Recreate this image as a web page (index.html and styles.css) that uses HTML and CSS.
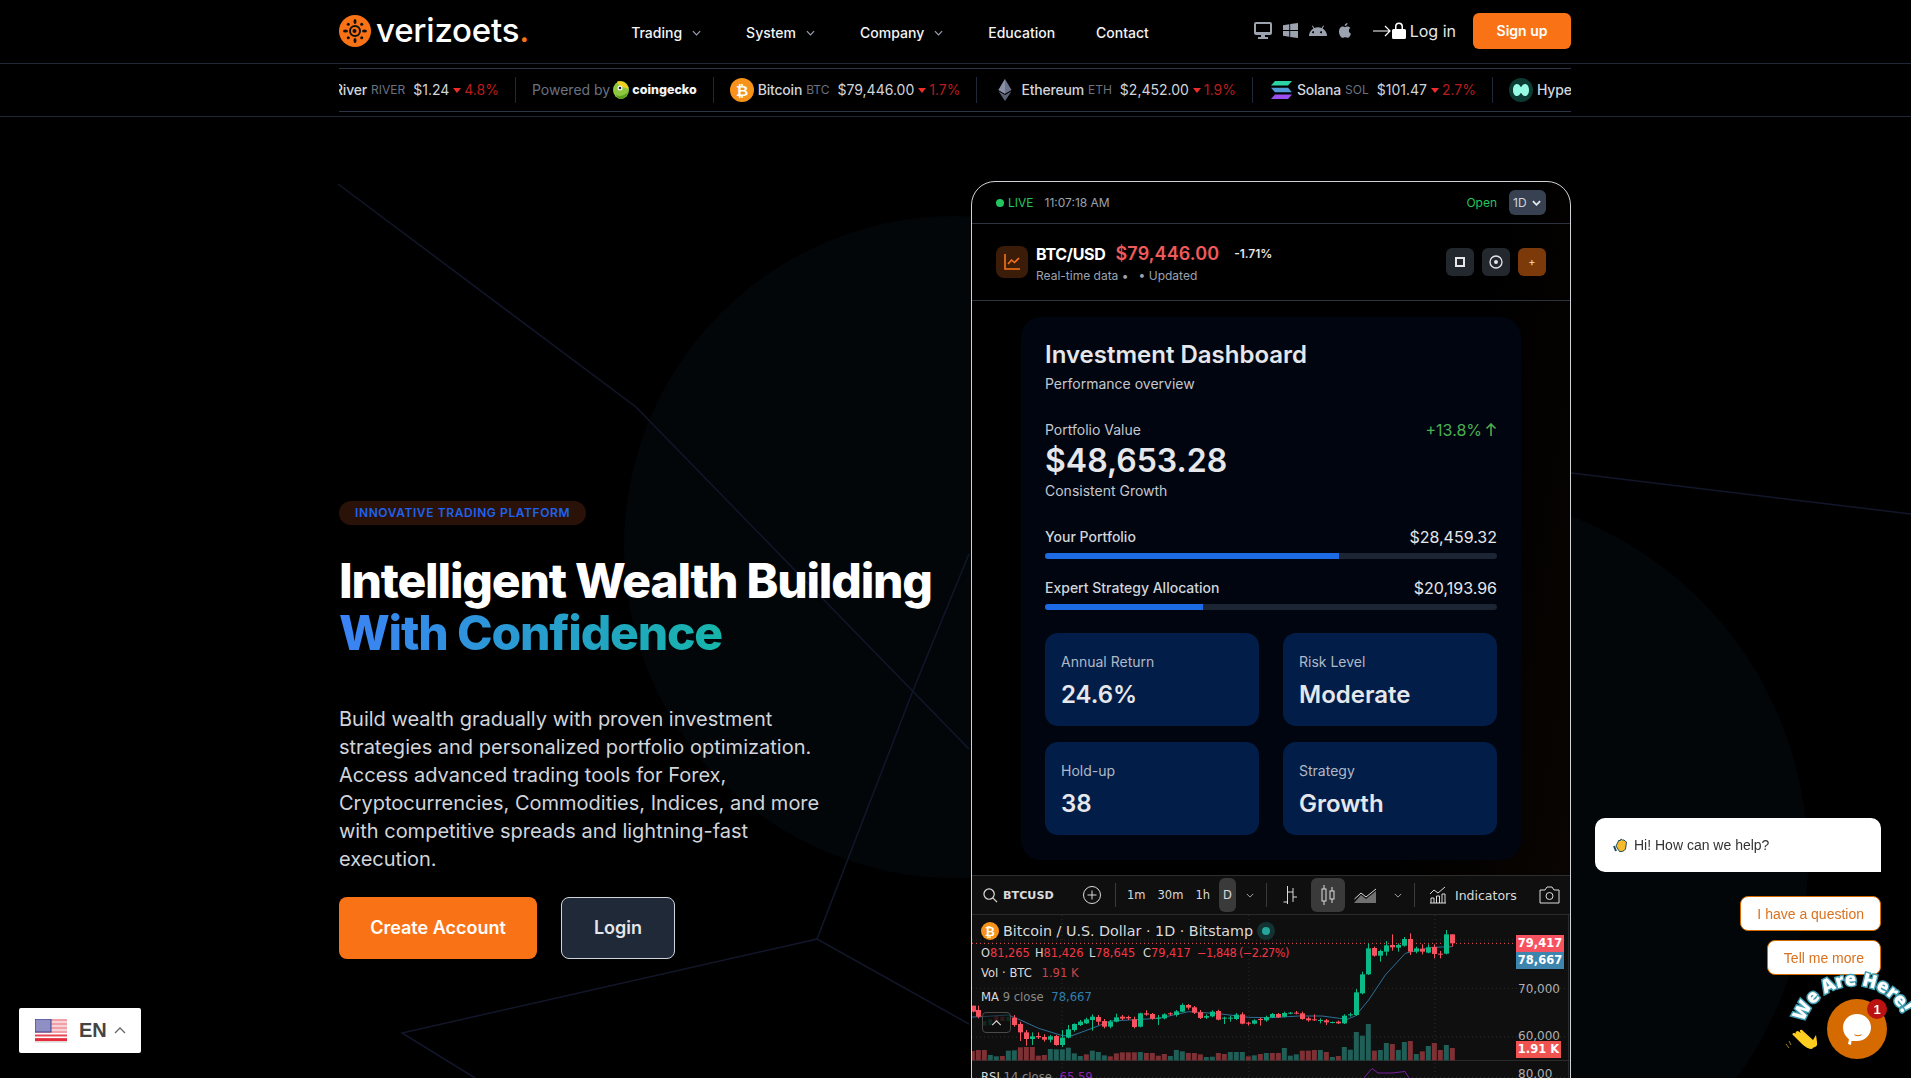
FILE: index.html
```html
<!DOCTYPE html>
<html lang="en">
<head>
<meta charset="utf-8">
<title>Verizoets</title>
<link rel="stylesheet" href="styles.css">
</head>
<body>
<svg class="backdrop" viewBox="0 0 1911 1078" aria-hidden="true">
  <circle cx="955" cy="547" r="331" fill="#020609"/>
  <circle cx="1440" cy="860" r="368" fill="#020609"/>
  <g fill="none" stroke="#12162a" stroke-width="1.500">
    <path d="M338 184 L636 407 L969 749"/>
    <path d="M969 554 L914 688 L817 939 L402 1033 L475 1078"/>
    <path d="M817 939 L969 1024"/>
    <path d="M1571 473 L1911 514"/>
  </g>
</svg>

<header class="site-header">
  <div class="container nav-row">
    <a class="logo">
      <svg class="logo-mark" viewBox="0 0 32 32">
        <circle cx="16" cy="16" r="16" fill="#f97316"/>
        <circle cx="16" cy="16" r="5" fill="none" stroke="#111" stroke-width="2"/>
        <circle cx="15.500" cy="16" r="2" fill="#111"/>
        <g fill="#111">
          <ellipse cx="16" cy="6.500" rx="1.500" ry="2.500"/><ellipse cx="16" cy="25.500" rx="1.500" ry="2.500"/>
          <ellipse cx="6.500" cy="16" rx="2.500" ry="1.500"/><ellipse cx="25.500" cy="16" rx="2.500" ry="1.500"/>
          <ellipse cx="9.300" cy="9.300" rx="1.500" ry="1.500"/><ellipse cx="22.700" cy="9.300" rx="1.500" ry="1.500"/>
          <ellipse cx="9.300" cy="22.700" rx="1.500" ry="1.500"/><ellipse cx="22.700" cy="22.700" rx="1.500" ry="1.500"/>
        </g>
      </svg>
      <span class="logo-text">verizoets<span class="logo-dot">.</span></span>
    </a>
    <nav class="main-nav">
      <a class="nav-link">Trading <svg class="chev" viewBox="0 0 10 6"><path d="M1 1l4 4 4-4"/></svg></a>
      <a class="nav-link">System <svg class="chev" viewBox="0 0 10 6"><path d="M1 1l4 4 4-4"/></svg></a>
      <a class="nav-link">Company <svg class="chev" viewBox="0 0 10 6"><path d="M1 1l4 4 4-4"/></svg></a>
      <a class="nav-link">Education</a>
      <a class="nav-link">Contact</a>
    </nav>
    <div class="platforms">
      <svg viewBox="0 0 18 17" class="pf pf-desktop"><path d="M2 0h14a2 2 0 0 1 2 2v9a2 2 0 0 1-2 2h-5v2h3v2H4v-2h3v-2H2a2 2 0 0 1-2-2V2a2 2 0 0 1 2-2zm0 2v8h14V2z"/></svg>
      <svg viewBox="0 0 15 15" class="pf pf-win"><path d="M0 2.200l6.300-1V7H0zM7.200 1L15 0v7H7.200zM0 8h6.300v5.800l-6.300-1zM7.200 8H15v7l-7.800-1.100z"/></svg>
      <svg viewBox="0 0 18 11" class="pf pf-android"><path d="M0 11a9 9 0 0 1 4.400-7.500L3 1l.8-.5 1.500 2.600a9 9 0 0 1 7.400 0L14.200.5 15 1l-1.400 2.500A9 9 0 0 1 18 11zM5 7.200a1 1 0 1 0 0 .1zm8 0a1 1 0 1 0 0 .1z"/></svg>
      <svg viewBox="0 0 13 16" class="pf pf-apple"><path d="M9.200 0c.1 1.800-1.400 3.300-3 3.200C6 1.500 7.600.1 9.200 0zM6.300 4.300c.8 0 1.500-.7 3-.7 1.200 0 2.400.6 3.100 1.700-2.500 1.500-2.100 5 .6 6.100-.6 1.600-2 4.500-3.600 4.500-.9 0-1.300-.6-2.600-.6s-1.700.6-2.600.6C1.900 16 0 12 0 9c0-3.300 2-5.300 4-5.300 1 0 1.800.6 2.300.6z"/></svg>
    </div>
    <a class="login-link">
      <svg class="login-arrow" viewBox="0 0 19 12"><path d="M0 6h17M12 1l5 5-5 5"/></svg>
      <svg class="login-lock" viewBox="0 0 14 17"><path d="M3 7V4.500a4 4 0 0 1 8 0V7h1.500A1.500 1.500 0 0 1 14 8.500v7a1.500 1.500 0 0 1-1.500 1.500h-11A1.500 1.500 0 0 1 0 15.500v-7A1.500 1.500 0 0 1 1.500 7zm1.500 0h5V4.500a2.500 2.500 0 0 0-5 0z"/></svg>
      <span>Log in</span>
    </a>
    <a class="signup">Sign up</a>
  </div>
</header>

<div class="ticker-band">
  <div class="container ticker">
    <div class="ticker-track">
      <div class="tick tick-river"><b>River</b><i>RIVER</i><span class="px">$1.24</span><em class="tri"></em><span class="down">4.8%</span></div>
      <div class="tick tick-powered">Powered by
        <svg class="gecko" viewBox="0 0 16 18"><ellipse cx="8" cy="9" rx="8" ry="9" fill="#8dc63f"/><path d="M4 0.800C9 -1 15 3 15.500 8 12 7 5 5 4 .8z" fill="#f4d21f"/><circle cx="7" cy="7" r="2.500" fill="#fff"/><circle cx="7" cy="7" r="1.300" fill="#123"/><path d="M3 14c3 2 8 1 12-3-1 4-4 7-7 7-2 0-4-1.500-5-4z" fill="#5a9e1e"/></svg>
        <strong class="cg">coingecko</strong></div>
      <div class="tick">
        <svg class="coin" viewBox="0 0 24 24"><circle cx="12" cy="12" r="12" fill="#f7931a"/><text x="12" y="17.500" class="coin-b">₿</text></svg>
        <b>Bitcoin</b><i>BTC</i><span class="px">$79,446.00</span><em class="tri"></em><span class="down">1.7%</span></div>
      <div class="tick">
        <svg class="coin" viewBox="0 0 24 24"><path d="M12 1l6.500 11L12 15.800 5.500 12z" fill="#6c7288"/><path d="M12 1v14.800L5.500 12z" fill="#8a90a8"/><path d="M12 17l6.500-3.800L12 23l-6.500-9.800z" fill="#5c6178"/></svg>
        <b>Ethereum</b><i>ETH</i><span class="px">$2,452.00</span><em class="tri"></em><span class="down">1.9%</span></div>
      <div class="tick">
        <svg class="coin" viewBox="0 0 24 24"><path d="M6 3h17l-4 4.500H2z" fill="#2bd3a5"/><path d="M2 9.700h17l4 4.500H6z" fill="#4f9bd8"/><path d="M6 16.500h17l-4 4.500H2z" fill="#9b4ff0"/></svg>
        <b>Solana</b><i>SOL</i><span class="px">$101.47</span><em class="tri"></em><span class="down">2.7%</span></div>
      <div class="tick">
        <svg class="coin" viewBox="0 0 24 24"><circle cx="12" cy="12" r="12" fill="#0c3b33"/><path d="M4 12c0-4 2-6 4-6 3 0 3 3 4 3s1-3 4-3c2 0 4 2 4 6s-2 6-4 6c-3 0-3-3-4-3s-1 3-4 3c-2 0-4-2-4-6z" fill="#97fce4"/></svg>
        <b>Hyperliquid</b></div>
    </div>
  </div>
</div>

<main class="container hero">
  <section class="hero-copy">
    <span class="eyebrow">INNOVATIVE TRADING PLATFORM</span>
    <h1 class="headline">Intelligent Wealth Building <span class="headline-accent">With Confidence</span></h1>
    <p class="lede">Build wealth gradually with proven investment strategies and personalized portfolio optimization. Access advanced trading tools for Forex, Cryptocurrencies, Commodities, Indices, and more with competitive spreads and lightning-fast execution.</p>
    <div class="cta-row">
      <a class="btn btn-primary">Create Account</a>
      <a class="btn btn-dark">Login</a>
    </div>
  </section>

  <section class="terminal">
    <div class="term-status">
      <span class="live-dot"></span><span class="live">LIVE</span><span class="clock">11:07:18 AM</span>
      <span class="open">Open</span>
      <span class="tf">1D <svg class="tf-chev" viewBox="0 0 10 6"><path d="M1 1l4 4 4-4"/></svg></span>
    </div>
    <div class="term-quote">
      <span class="quote-icon"><svg viewBox="0 0 18 18"><path d="M2 1v15h15M5 11l3.500-4 3 2.500L16 5"/></svg></span>
      <div class="quote-main">
        <div class="quote-top"><strong class="pair">BTC/USD</strong><span class="quote-px">$79,446.00</span><span class="quote-chg">-1.71%</span></div>
        <div class="quote-sub">Real-time data&nbsp;•&nbsp;&nbsp;&nbsp;•&nbsp;Updated</div>
      </div>
      <div class="quote-btns">
        <span class="qbtn"><svg class="q-stop" viewBox="0 0 10 10"><rect x="1" y="1" width="8" height="8"/></svg></span>
        <span class="qbtn"><svg viewBox="0 0 14 14"><circle cx="7" cy="7" r="6"/><circle cx="7" cy="7" r="1.300" class="qfill"/></svg></span>
        <span class="qbtn qbtn-add">+</span>
      </div>
    </div>
    <div class="term-body">
      <div class="dash">
        <h2 class="dash-title">Investment Dashboard</h2>
        <div class="dash-sub">Performance overview</div>
        <div class="pf-head"><span>Portfolio Value</span><span class="pf-up">+13.8% <svg viewBox="0 0 12 14"><path d="M6 13V1M1.500 5.500L6 1l4.500 4.500"/></svg></span></div>
        <div class="pf-value">$48,653.28</div>
        <div class="pf-note">Consistent Growth</div>
        <div class="alloc alloc-first">
          <div class="alloc-row"><span>Your Portfolio</span><span class="alloc-val">$28,459.32</span></div>
          <div class="track"><div class="fill" style="width:65%"></div></div>
        </div>
        <div class="alloc">
          <div class="alloc-row"><span>Expert Strategy Allocation</span><span class="alloc-val">$20,193.96</span></div>
          <div class="track"><div class="fill" style="width:35%"></div></div>
        </div>
        <div class="stats">
          <div class="stat"><div class="stat-label">Annual Return</div><div class="stat-value">24.6%</div></div>
          <div class="stat"><div class="stat-label">Risk Level</div><div class="stat-value">Moderate</div></div>
          <div class="stat"><div class="stat-label">Hold-up</div><div class="stat-value">38</div></div>
          <div class="stat"><div class="stat-label">Strategy</div><div class="stat-value">Growth</div></div>
        </div>
      </div>
    </div>
    <div class="tv">
      <div class="tv-bar">
        <svg class="tv-i tv-search" viewBox="0 0 16 16"><circle cx="6.500" cy="6.500" r="5.500"/><path d="M10.500 10.500L15 15"/></svg>
        <strong class="tv-sym">BTCUSD</strong>
        <svg class="tv-i tv-plus" viewBox="0 0 18 18"><circle cx="9" cy="9" r="8.500"/><path d="M9 4.500v9M4.500 9h9"/></svg>
        <span class="tv-sep tv-sep-a"></span>
        <span class="tv-tf">1m</span><span class="tv-tf">30m</span><span class="tv-tf">1h</span><span class="tv-tf tv-on">D</span>
        <svg class="tv-chev" viewBox="0 0 10 6"><path d="M1 1l4 4 4-4"/></svg>
        <span class="tv-sep tv-sep-b"></span>
        <svg class="tv-i tv-bars" viewBox="0 0 14 20"><path d="M4.500 1v18M.5 17h4M4.500 7h3M10 3v14M7.500 7H10M10 12h4"/></svg>
        <span class="tv-candle"><svg class="tv-i" viewBox="0 0 14 20"><rect x="1" y="4" width="4" height="12"/><path d="M3 0v4M3 16v4M11 2v4M11 14v4"/><rect x="9" y="6" width="4" height="8"/></svg></span>
        <svg class="tv-i tv-area" viewBox="0 0 24 15"><path d="M.5 11L7 5l5 4 10-8"/><path class="tv-hatch" d="M0 15l7-8 5 4 10-8v12z"/></svg>
        <svg class="tv-chev tv-chev-b" viewBox="0 0 10 6"><path d="M1 1l4 4 4-4"/></svg>
        <span class="tv-sep tv-sep-c"></span>
        <svg class="tv-i tv-ind" viewBox="0 0 18 18"><path d="M1 8l4-4 4 3 7-6M1 17h16M2 17v-5h3v5M7.500 17v-7h3v7M13 17v-9h3v9"/></svg>
        <span class="tv-label">Indicators</span>
        <svg class="tv-i tv-cam" viewBox="0 0 21 18"><path d="M1 4h5l2-3h5l2 3h5v13H1z"/><circle cx="10.500" cy="10" r="3.500"/></svg>
      </div>
      <div class="tv-chart">
        <svg id="candles" class="tv-canvas" viewBox="0 0 598 163"></svg>
        <div class="legend">
          <div class="legend-title">
            <svg class="legend-coin" viewBox="0 0 18 18"><circle cx="9" cy="9" r="9" fill="#f7931a"/><text x="9" y="13.500" class="legend-b">₿</text></svg>
            <span>Bitcoin / U.S. Dollar · 1D · Bitstamp</span><span class="legend-live"></span>
          </div>
          <div class="legend-ohlc">
            <span class="l-seg"><span class="l-w">O</span>81,265</span>
            <span class="l-seg"><span class="l-w">H</span>81,426</span>
            <span class="l-seg"><span class="l-w">L</span>78,645</span>
            <span class="l-seg"><span class="l-w">C</span>79,417</span>
            <span class="l-seg l-seg-chg">−1,848</span>
            <span class="l-seg-pct">(−2.27%)</span>
          </div>
          <div class="legend-row">Vol · BTC <span class="l-r">1.91 K</span></div>
          <div class="legend-row legend-ma">MA <span class="l-g">9 close</span> <span class="l-b">78,667</span></div>
        </div>
        <span class="collapse"><svg viewBox="0 0 12 7"><path d="M1 6l5-5 5 5"/></svg></span>
        <div class="rsi">RSI <span class="l-g">14 close</span> <span class="l-p">65.59</span></div>
        <span class="axis tag tag-red">79,417</span>
        <span class="axis tag tag-blue">78,667</span>
        <span class="axis lbl lbl-70">70,000</span>
        <span class="axis lbl lbl-60">60,000</span>
        <span class="axis tag tag-vol">1.91 K</span>
        <span class="axis lbl lbl-80">80.00</span>
      </div>
    </div>
  </section>
</main>

<div class="lang">
  <svg class="flag" viewBox="0 0 32 24">
    <rect width="32" height="24" fill="#f2a0a8"/>
    <g fill="#f6d2d6"><rect y="2" width="32" height="2"/><rect y="6" width="32" height="2"/><rect y="10" width="32" height="2"/></g>
    <rect y="14" width="32" height="1.600" fill="#fff"/><rect y="15.600" width="32" height="2" fill="#e84855"/><rect y="17.600" width="32" height="1.600" fill="#fff"/><rect y="19.200" width="32" height="3" fill="#e52b3a"/><rect y="22.200" width="32" height="1.800" fill="#e8e8e8"/>
    <rect width="16" height="13" fill="#8f8fc4" stroke="#3b3f8f"/>
  </svg>
  <span class="lang-code">EN</span>
  <svg class="lang-chev" viewBox="0 0 12 7"><path d="M1 6l5-5 5 5"/></svg>
</div>

<aside class="chat">
  <div class="chat-bubble">
    <svg class="wave-small" viewBox="0 0 16 16"><path d="M3 9l3-6 1 1 1-2 1.500 1 1.500 0 1 1 1.500 1-1 7c-1 2-4 3-6 2.500z" fill="#f6bb2a" stroke="#1f4c5c"/><path d="M1 9l2 5" stroke="#1f4c5c" stroke-width="2"/></svg>
    <span>Hi! How can we help?</span>
  </div>
  <a class="chat-opt">I have a question</a>
  <a class="chat-opt">Tell me more</a>
  <div class="chat-launch">
    <svg class="launch-art" viewBox="0 0 131 118">
      <defs><path id="arc" d="M21.500 72 A 54 54 0 0 1 128 69"/></defs>
      <text class="we-here"><textPath href="#arc" startOffset="10">We Are Here!</textPath></text>
      <circle cx="77" cy="69" r="30" fill="#d46a00"/>
      <path d="M77 54c8 0 14 6 14 13.500S85 81 77 81l-5.500 0-0.500 4-3-1 1-4.500C65 76 63 72 63 67.500 63 60 69 54 77 54z" fill="#fff"/>
      <path d="M74 74c2 1.500 6 1.500 8 0-1 3-7 3-8 0z" fill="#d46a00"/>
      <circle cx="97" cy="49" r="10" fill="#bb1111"/>
      <text x="97" y="54" class="badge-num">1</text>
      <path d="M14 76l8 8c3 3 7 5 10 5 2-3 6-1 5-7l-1-7-3 5-11-10c-2-1-3 1-1 3l-3-2c-3 0-3 3-1 3l-3-1c-2 0-2 2 0 3z" fill="#ffcd1f"/>
      <path d="M9 81l2 4M6 84l3 4" stroke="#9a8320" fill="none"/>
    </svg>
  </div>
</aside>
<script src="chart.js"></script>
</body>
</html>
```
FILE: styles.css
```css
* { box-sizing: border-box; }
html, body { margin: 0; height: 100%; }
body {
  position: relative;
  height: 1078px;
  overflow: hidden;
  background: #000;
  color: #fff;
  font-family: Inter, "Liberation Sans", sans-serif;
}
a { color: inherit; text-decoration: none; }
.backdrop { position: absolute; inset: 0; width: 100%; height: 100%; z-index: 0; }
.container { width: 1232px; margin: 0 0 0 339px; position: relative; }

.site-header { position: relative; height: 64px; border-bottom: 1px solid #1e2836; }
.nav-row { display: flex; align-items: center; height: 63px; }
.logo { display: flex; align-items: center; gap: 5px; margin-top: -1px; }
.logo-mark { width: 32px; height: 32px; display: block; }
.logo-text { font-size: 33px; font-weight: 500; color: #fff; letter-spacing: -0.2px; line-height: 1; margin-top: -2px; }
.logo-dot { color: #f97316; }
.main-nav { display: flex; align-items: center; margin-left: 102px; gap: 41px; }
.nav-link { display: flex; align-items: center; gap: 10px; font-size: 14px; font-weight: 500; color: #f3f4f6; margin-top: 2px; }
.chev { width: 9px; height: 6px; margin-right: 4px; fill: none; stroke: #9ca3af; stroke-width: 1.300; }
.platforms { display: flex; align-items: center; margin-left: auto; gap: 11px; fill: #9ca3af; margin-top: -2px; }
.pf { display: block; }
.pf-desktop { width: 18px; height: 17px; }
.pf-win { width: 15px; height: 15px; }
.pf-android { width: 18px; height: 11px; }
.pf-apple { width: 12px; height: 15px; margin-left: 1px; }
.login-link { display: flex; align-items: center; margin-left: 22px; font-size: 16px; color: #e5e7eb; margin-top: -2px; }
.login-arrow { width: 19px; height: 12px; fill: none; stroke: #fff; stroke-width: 1.200; }
.login-lock { width: 14px; height: 17px; fill: #fff; margin-right: 4px; }
.signup { margin-left: 17px; width: 98px; height: 36px; display: flex; align-items: center; justify-content: center; margin-top: -2px; background: #f97316; border-radius: 6px; font-size: 14px; font-weight: 600; color: #fff; }

.ticker-band { position: relative; height: 53px; border-bottom: 1px solid #1e2836; padding: 4px 0; }
.ticker { height: 44px; border-top: 1px solid #2a3646; border-bottom: 1px solid #2a3646; overflow: hidden; }
.ticker-track { display: flex; align-items: center; height: 100%; margin-left: -5px; width: 1400px; }
.tick { display: flex; align-items: center; height: 26px; flex: none; padding: 0 16px; border-right: 1px solid #1f2937; font-size: 14px; color: #d1d5db; white-space: nowrap; margin-top: -1px; }
.tick b { font-weight: 500; color: #d1d5db; letter-spacing: -0.2px; }
.tick i { font-style: normal; font-size: 12px; color: #6b7280; margin-left: 4px; }
.tick .px { margin-left: 8px; color: #d1d5db; }
.tick .down { color: #b91c1c; }
.tri { width: 0; height: 0; border: 4.500px solid transparent; border-top: 5px solid #ef2b2b; border-bottom: 0; margin: 1px 3px 0 4px; }
.tick-river { padding-left: 0; padding-right: 16px; }
.tick-powered { color: #6b7280; font-size: 14px; gap: 3px; }
.gecko { width: 16px; height: 18px; }
.cg { color: #f3f4f6; font-size: 12.500px; font-weight: 800; }
.coin { width: 24px; height: 24px; margin-right: 4px; }
.coin-b { font-family: "DejaVu Sans", sans-serif; font-size: 15px; font-weight: 700; fill: #fff; text-anchor: middle; }

.hero { position: relative; display: flex; justify-content: space-between; align-items: flex-start; z-index: 1; }
.hero-copy { width: 590px; padding-top: 384px; }
.eyebrow { display: inline-block; height: 24px; line-height: 24px; padding: 0 16px; border-radius: 12px; background: #2a1208; color: #1f62f0; font-size: 12px; font-weight: 600; letter-spacing: 0.600px; }
.headline { margin: 30px 0 0; font-size: 48px; font-weight: 800; line-height: 52px; letter-spacing: -1.200px; color: #fff; width: 620px; }
.headline-accent { display: block; background: linear-gradient(90deg, #3b82f6, #14b8a6); -webkit-background-clip: text; background-clip: text; color: transparent; width: 403px; }
.lede { margin: 46px 0 0; width: 490px; font-size: 20px; line-height: 28px; color: #d1d5db; }
.cta-row { display: flex; gap: 24px; margin-top: 24px; }
.btn { display: flex; align-items: center; justify-content: center; height: 62px; padding-bottom: 2px; border-radius: 8px; font-size: 18px; font-weight: 600; }
.btn-primary { width: 198px; background: #f97316; color: #fff; }
.btn-dark { width: 114px; background: #1f2937; color: #e5e7eb; border: 1px solid #d1d5db; }

.terminal { width: 600px; height: 1000px; margin-top: 64px; border: 1px solid #cfd3d8; border-radius: 24px 24px 0 0; background: linear-gradient(100deg, #000 70%, #0c0602); overflow: hidden; }
.term-status { display: flex; align-items: center; height: 42px; padding: 0 24px; border-bottom: 1px solid #2d3440; font-size: 12px; }
.live-dot { width: 8px; height: 8px; border-radius: 50%; background: #22c55e; }
.live { color: #22c55e; margin-left: 4px; }
.clock { color: #9ca3af; margin-left: 11px; }
.open { color: #22c55e; margin-left: auto; }
.tf { display: flex; align-items: center; gap: 5px; width: 37px; height: 25px; margin-left: 12px; padding-left: 4px; background: #374151; border-radius: 6px; color: #d1d5db; }
.tf-chev { width: 9px; height: 6px; fill: none; stroke: #e5e7eb; stroke-width: 2; }
.term-quote { display: flex; align-items: center; height: 77px; padding: 0 24px; border-bottom: 1px solid #2d3440; }
.quote-icon { width: 32px; height: 32px; display: flex; align-items: center; justify-content: center; background: #3b1c08; border-radius: 8px; }
.quote-icon svg { width: 18px; height: 18px; fill: none; stroke: #f97316; stroke-width: 1.600; }
.quote-main { margin-left: 8px; }
.quote-top { display: flex; align-items: center; height: 22px; margin-top: 1px; }
.pair { font-size: 16px; font-weight: 700; color: #fff; letter-spacing: -0.300px; }
.quote-px { font-size: 18px; font-weight: 600; color: #f05a5a; margin-left: 10px; letter-spacing: 0.100px; }
.quote-chg { font-size: 12px; font-weight: 600; color: #e5e7eb; margin-left: 15px; }
.quote-sub { font-size: 12px; color: #9ca3af; margin-top: 3px; }
.quote-btns { display: flex; gap: 8px; margin-left: auto; }
.qbtn { width: 28px; height: 28px; display: flex; align-items: center; justify-content: center; background: #23272e; border-radius: 6px; }
.qbtn svg { width: 14px; height: 14px; fill: none; stroke: #e5e7eb; stroke-width: 1.300; }
.qbtn .q-stop { width: 10px; height: 10px; stroke-width: 2; }
.qfill { fill: #e5e7eb; }
.qbtn-add { background: #7c3a0a; color: #f3e0d0; font-size: 11px; }
.term-body { padding: 16px 49px 15px; }
.dash { height: 543px; padding: 24px; background: #01050f; border-radius: 20px; }
.dash-title { margin: 0; font-size: 24px; font-weight: 600; line-height: 28px; color: #e5e7eb; }
.dash-sub { margin-top: 5px; font-size: 14px; line-height: 20px; color: #c4c8cf; }
.pf-head { display: flex; justify-content: space-between; align-items: center; margin-top: 26px; font-size: 14px; line-height: 20px; color: #c4c8cf; }
.pf-up { display: flex; align-items: center; gap: 3px; color: #4caf50; font-size: 16px; }
.pf-up svg { width: 12px; height: 14px; fill: none; stroke: #4caf50; stroke-width: 1.600; }
.pf-value { margin-top: 1px; font-size: 32px; font-weight: 600; line-height: 40px; color: #e5e7eb; }
.pf-note { font-size: 14px; line-height: 20px; color: #c4c8cf; }
.alloc { margin-top: 17px; }
.alloc-first { margin-top: 24px; }
.alloc-row { display: flex; justify-content: space-between; align-items: center; font-size: 14px; line-height: 24px; font-weight: 500; color: #d1d5db; }
.alloc-val { font-size: 16px; font-weight: 400; color: #e5e7eb; }
.track { height: 6px; margin-top: 4px; background: #1c2533; border-radius: 3px; overflow: hidden; }
.fill { height: 100%; background: #1d6ae5; }
.stats { display: grid; grid-template-columns: 214px 214px; justify-content: space-between; gap: 16px 24px; margin-top: 23px; }
.stat { height: 93px; padding: 19px 16px 0; background: #021d47; border-radius: 13px; }
.stat-label { font-size: 14px; line-height: 20px; color: #b0b9c8; }
.stat-value { margin-top: 7px; font-size: 24px; line-height: 32px; font-weight: 600; color: #e5e7eb; }

.tv { background: #0f0f0f; border-top: 1px solid #2e2e2e; }
.tv-bar { display: flex; align-items: center; height: 39px; border-bottom: 1px solid #2a2a2a; font-family: "DejaVu Sans", sans-serif; font-size: 12.500px; color: #dbdbdb; }
.tv-i { fill: none; stroke: #dbdbdb; stroke-width: 1; display: block; flex: none; }
.tv-search { width: 15px; height: 15px; margin-left: 11px; stroke-width: 1.300; }
.tv-sym { margin-left: 5px; width: 52px; font-weight: 700; font-size: 11.200px; }
.tv-plus { width: 18px; height: 18px; margin-left: 28px; }
.tv-sep { width: 1px; height: 24px; background: #3a3a3a; flex: none; }
.tv-sep-a { margin: 0 11px 0 14px; }
.tv-tf { margin-right: 12px; font-size: 11.500px; }
.tv-on { width: 17px; height: 34px; margin: 0 0 0 -3px; display: flex; align-items: center; justify-content: center; background: #3a3a3a; border-radius: 6px; }
.tv-chev { width: 8px; height: 5px; fill: none; stroke: #a8a8a8; stroke-width: 1.200; margin-left: 10px; flex: none; }
.tv-sep-b { margin: 0 16px 0 12px; }
.tv-bars { width: 14px; height: 20px; }
.tv-candle { width: 34px; height: 34px; margin-left: 14px; display: flex; align-items: center; justify-content: center; background: #3a3a3a; border-radius: 6px; }
.tv-candle svg { width: 14px; height: 20px; }
.tv-area { width: 24px; height: 15px; margin-left: 9px; }
.tv-hatch { fill: #9a9a9a; stroke: none; opacity: 0.700; }
.tv-chev-b { margin-left: 16px; }
.tv-sep-c { margin: 0 14px 0 12px; }
.tv-ind { width: 18px; height: 18px; }
.tv-label { margin-left: 8px; font-size: 12.500px; }
.tv-cam { width: 21px; height: 18px; margin-left: 22px; }

.tv-chart { position: relative; height: 180px; }
.tv-canvas { position: absolute; left: 0; top: 0; width: 598px; height: 163px; display: block; }
.legend { position: absolute; left: 9px; top: 6px; font-family: "DejaVu Sans", sans-serif; }
.legend-title { display: flex; align-items: center; height: 20px; font-size: 14.300px; color: #dbdbdb; white-space: nowrap; }
.legend-coin { width: 18px; height: 18px; margin-right: 4px; }
.legend-b { font-size: 12px; font-weight: 700; fill: #fff; text-anchor: middle; }
.legend-live { width: 8px; height: 8px; margin-left: 9px; border-radius: 50%; background: #26a69a; box-shadow: 0 0 0 5px #123331; }
.legend-ohlc { display: flex; margin-top: 3px; height: 18px; line-height: 18px; font-size: 11.400px; color: #f23645; white-space: nowrap; }
.l-seg { width: 54px; flex: none; }
.l-seg-chg { width: 42px; letter-spacing: -0.500px; }
.l-seg-pct { letter-spacing: -0.600px; }
.l-w { color: #dbdbdb; }
.legend-row { height: 18px; line-height: 18px; margin-top: 2px; font-size: 11.600px; color: #dbdbdb; white-space: nowrap; }
.legend-ma { margin-top: 6px; }
.l-r { color: #c9454c; margin-left: 6px; }
.l-g { color: #8a8a8a; }
.l-b { color: #2f7fb0; margin-left: 4px; }
.l-p { color: #8e24aa; margin-left: 4px; }
.collapse { position: absolute; left: 10px; top: 97px; width: 29px; height: 21px; display: flex; align-items: center; justify-content: center; border: 1px solid #4a4a4a; border-radius: 4px; background: rgba(15,15,15,.55); }
.collapse svg { width: 11px; height: 6px; fill: none; stroke: #dbdbdb; stroke-width: 1.300; }
.rsi { position: absolute; left: 9px; top: 155px; font-family: "DejaVu Sans", sans-serif; font-size: 11.600px; color: #dbdbdb; white-space: nowrap; }
.axis { position: absolute; font-family: "DejaVu Sans", sans-serif; font-size: 12px; font-weight: 400; white-space: nowrap; }
.tag { left: 544px; height: 17px; line-height: 17px; text-align: center; color: #fff; font-weight: 700; font-size: 11.500px; }
.tag-red { top: 20px; width: 48px; background: #f7525f; }
.tag-blue { top: 37px; width: 48px; background: #3d85ad; }
.tag-vol { top: 126px; width: 45px; background: #ef5350; }
.lbl { left: 546px; color: #b0b0b0; }
.lbl-70 { top: 67px; }
.lbl-60 { top: 114px; }
.lbl-80 { top: 152px; }

.lang { position: fixed; left: 19px; top: 1008px; width: 122px; height: 45px; display: flex; align-items: center; background: #fff; border-radius: 2px; z-index: 5; }
.flag { width: 32px; height: 24px; margin-left: 16px; }
.lang-code { margin-left: 12px; font-family: "Liberation Sans", sans-serif; font-size: 20px; font-weight: 700; color: #444; }
.lang-chev { width: 12px; height: 7px; margin-left: 7px; fill: none; stroke: #666; stroke-width: 1.300; }

.chat { position: fixed; left: 1595px; top: 818px; width: 316px; height: 260px; z-index: 5; font-family: "Liberation Sans", sans-serif; display: flex; flex-direction: column; align-items: flex-end; padding-right: 30px; }
.chat-bubble { display: flex; align-items: center; gap: 5px; width: 286px; height: 54px; padding-left: 18px; background: #fff; border-radius: 10px 10px 0 10px; color: #333; font-size: 14px; }
.wave-small { width: 16px; height: 16px; }
.chat-opt { display: flex; align-items: center; height: 35px; margin-top: 9px; padding: 0 16px; background: #fff; border: 1px solid #d46a00; border-radius: 8px; color: #d9721f; font-size: 14px; }
.chat-bubble + .chat-opt { margin-top: 24px; }
.chat-launch { position: absolute; left: 185px; top: 142px; width: 131px; height: 118px; }
.launch-art { width: 131px; height: 118px; display: block; overflow: visible; }
.we-here { font-family: "Open Sans", sans-serif; font-weight: 800; font-size: 18.500px; fill: #fff; stroke: #3f9fb2; stroke-width: 3px; paint-order: stroke; }
.badge-num { font-size: 13px; font-weight: 700; fill: #fff; text-anchor: middle; }
```
FILE: chart.js
```js
// x, body top, body bottom, wick top, wick bottom (zoomed reference units), colour
const G = '#0bba87', R = '#f7525f';
const left = [
[2,272,290,272,292,R],[19,285,305,272,310,R],[127,308,330,300,335,R],[145,327,352,320,378,R],[163,352,372,345,392,R],[181,364,372,352,390,G],[199,363,367,352,372,R],[217,366,374,358,380,R],[235,364,374,360,382,G],[253,363,390,360,392,R],[271,368,390,345,396,G],[289,343,368,330,370,G],[307,327,345,325,350,G],[325,320,330,315,333,G],[343,313,325,308,327,G],[361,305,315,298,347,G],[379,306,320,300,330,R],[397,318,335,312,340,R],[415,320,335,315,340,G],[433,307,320,296,322,G],[451,305,311,300,315,R],[469,306,310,302,315,R],[487,313,336,305,340,R],[505,295,335,293,337,G],[523,295,299,286,302,R],[541,297,311,294,314,R],[559,308,311,300,330,G],[577,298,310,295,313,G],[595,295,298,292,302,R],[613,289,300,285,305,G],[631,270,290,265,292,G],[649,270,278,267,284,R],[667,277,293,273,297,R],[685,292,309,285,312,R],[703,303,308,298,312,G],[721,290,304,286,307,G],[739,288,314,284,316,R],[757,308,310,305,327,G],[775,308,310,302,320,G],[793,299,312,294,315,G],[811,298,326,292,328,R],[829,323,326,320,332,R],[847,316,326,313,328,G],[865,312,315,308,332,R],[883,306,316,302,320,G],
[901,297,307,294,309,G],[919,297,307,294,309,R],[937,294,305,290,307,G],[955,293,296,291,298,G],[973,293,296,288,298,R],[991,295,312,290,314,R],[1009,310,316,305,320,R],[1027,313,316,298,318,R],[1045,315,317,310,325,G],[1063,316,322,312,330,R],[1081,321,324,320,325,G],[1099,320,325,317,327,R],[1117,302,325,298,327,G],[1135,298,300,293,305,G],[1153,232,300,222,303,G],[1171,178,235,170,238,G],[1189,100,178,85,180,G],[1207,99,122,95,125,R],[1225,108,122,104,140,G],[1243,91,110,78,122,G],[1261,90,97,58,107,R],[1279,90,98,85,110,G],[1297,72,92,66,95,G],[1315,72,110,55,120,R],[1333,100,110,95,115,G],[1351,101,110,88,118,R],[1369,97,113,88,115,G],[1387,96,117,88,130,R],[1405,116,118,108,130,R],[1423,58,116,45,118,G],[1441,58,85,58,95,R]];
const vols = [[1,408,R],[19,405,R],[37,405,R],[55,420,G],[73,424,G],[91,423,R],[109,407,G],[127,406,G],[145,397,R],[163,396,R],[181,396,R],[199,422,R],[217,420,R],[235,402,G],[253,403,G],[271,403,G],[289,398,G],[307,415,G],[325,423,G],[343,418,R],[361,407,G],[379,411,G],[397,421,G],[415,424,R],[433,415,R],[451,412,R],[469,412,R],[487,412,R],[505,411,G],[523,414,R],[541,414,R],[559,422,R],[577,417,R],[595,423,G],[613,405,G],[631,409,G],[649,414,R],[667,414,R],[685,418,R],[703,426,G],[721,425,G],[739,414,R],[757,417,R],[775,411,G],[793,411,G],[811,411,G],[829,424,R],[847,421,G],[865,417,R],[883,414,G],
[901,414,R],[919,414,R],[937,399,G],[955,422,G],[973,418,G],[991,407,R],[1009,407,R],[1027,405,R],[1045,405,G],[1063,411,R],[1081,426,G],[1099,423,R],[1117,396,G],[1135,404,G],[1153,351,G],[1171,362,G],[1189,327,G],[1207,407,R],[1225,405,G],[1243,384,G],[1261,387,R],[1279,405,G],[1297,381,G],[1315,378,R],[1333,417,G],[1351,409,R],[1369,393,G],[1387,384,R],[1405,405,R],[1423,390,G],[1441,399,R]];
const ma = [[0,306],[30,305],[109,300],[145,315],[200,340],[271,362],[300,362],[360,340],[415,318],[470,315],[560,310],[650,290],[740,296],[830,307],[900,308],[980,303],[1050,303],[1125,313],[1150,303],[1190,255],[1240,180],[1300,115],[1320,110],[1380,97],[1440,95]];
const u = 1 / 3;
let s = '';
const grid = 'stroke="#2c2c2c" stroke-dasharray="1 3"';
[75, 220, 366, 487].forEach(y => { s += `<line x1="0" x2="598" y1="${y * u}" y2="${y * u}" ${grid}/>`; });
[90, 277, 463].forEach(x => { s += `<line x1="${x}" x2="${x}" y1="0" y2="163" ${grid}/>`; });
s += `<line x1="0" x2="544" y1="${85 * u}" y2="${85 * u}" stroke="#f7525f" stroke-dasharray="1 3"/>`;
s += `<line x1="0" x2="598" y1="145.500" y2="145.500" stroke="#2a2a2a"/>`;
s += `<line x1="596.500" x2="596.500" y1="0" y2="163" stroke="#2a2a2a"/>`;
vols.forEach(([x, t, c]) => {
  s += `<rect x="${x * u - 2.5}" y="${t * u}" width="5" height="${(436 - t) * u}" fill="${c === G ? '#1f5f57' : '#7e3134'}"/>`;
});
[[37,318,332,G],[55,313,330,G],[73,302,320,R],[91,305,318,R],[109,305,318,G]].forEach(([x,t,b,c]) => {
  s += `<rect x="${x * u - 2}" y="${t * u}" width="4" height="${(b - t) * u}" fill="${c}" opacity=".35"/>`;
});
s += `<polyline fill="none" stroke="#2f6f99" stroke-width="1" points="${ma.map(p => (p[0] * u) + ',' + (p[1] * u)).join(' ')}"/>`;
left.forEach(([x, t, b, wt, wb, c]) => {
  const cx = Math.round(x * u) + 0.5;
  s += `<line x1="${cx}" x2="${cx}" y1="${wt * u}" y2="${wb * u}" stroke="${c}"/>`;
  s += `<rect x="${cx - 2.5}" y="${t * u}" width="5" height="${Math.max(1, (b - t) * u)}" fill="${c}"/>`;
});
s += `<polyline fill="none" stroke="#7b1fa2" stroke-width="1" points="392,163 396,158 400,153.500 406,158 420,158 433,156.500 437,163"/>`;
document.getElementById('candles').innerHTML = s;
```
